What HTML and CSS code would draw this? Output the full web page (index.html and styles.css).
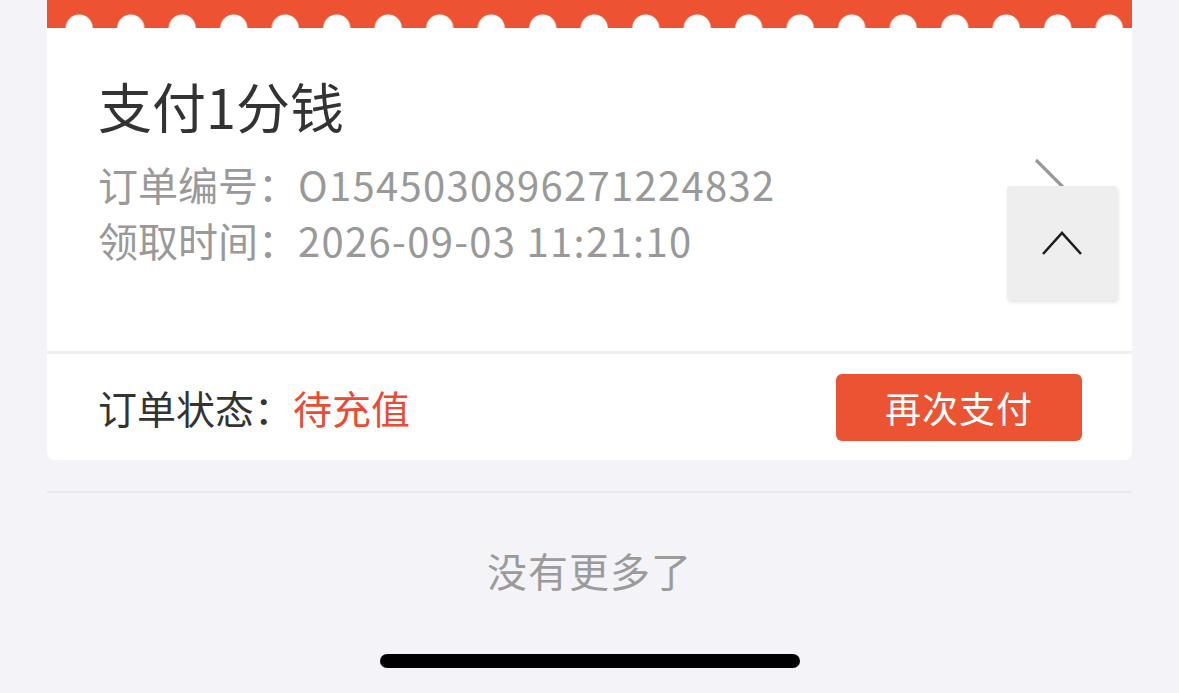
FILE: index.html
```html
<!DOCTYPE html>
<html lang="zh-CN">
<head>
<meta charset="utf-8">
<title>订单</title>
<link rel="stylesheet" href="styles.css">
</head>
<body>
<div class="page">
  <div class="card">
    <div class="band"></div>
    <div class="info">
      <div class="title">支付1分钱</div>
      <div class="meta"><span class="label">订单编号：</span><span class="num">O1545030896271224832</span></div>
      <div class="meta"><span class="label">领取时间：</span><span class="num">2026-09-03 11:21:10</span></div>
      <svg class="chev" width="40" height="70" viewBox="0 0 40 70"><polyline points="4,2 36,34 4,66" fill="none" stroke="#9a9a9a" stroke-width="3.2"/></svg>
      <div class="totop">
        <svg width="44" height="28" viewBox="0 0 44 28"><polyline points="3,25 22,4 41,25" fill="none" stroke="#1e1e1e" stroke-width="2.6"/></svg>
      </div>
    </div>
    <div class="divider"></div>
    <div class="status">
      <div class="status-text">订单状态：<span class="red">待充值</span></div>
      <div class="btn">再次支付</div>
    </div>
  </div>
  <div class="rule"></div>
  <div class="nomore">没有更多了</div>
  <div class="home"></div>
</div>
</body>
</html>
```

FILE: styles.css
```css
html, body {
  margin: 0;
  padding: 0;
  background: #f4f4f8;
  font-family: "Noto Sans CJK SC", "Noto Sans", sans-serif;
}
.page {
  width: 1179px;
  height: 693px;
  overflow: hidden;
  padding: 0 47px;
  box-sizing: border-box;
}
.card {
  background: #ffffff;
  border-radius: 0 0 8px 8px;
}
.band {
  height: 28px;
  background-color: #ed5333;
  background-image: radial-gradient(circle at 50% 100%, #ffffff 13px, rgba(255,255,255,0) 14px);
  background-size: 51.5px 28px;
  background-position: 6.5px 0;
  background-repeat: repeat-x;
}
.info {
  position: relative;
  height: 323px;
  padding: 46px 0 0 51px;
  box-sizing: border-box;
}
.title {
  font-size: 54px;
  line-height: 64px;
  color: #333333;
  margin-bottom: 18px;
}
.meta {
  font-size: 40px;
  line-height: 56px;
  color: #999999;
  white-space: nowrap;
}
.num {
  letter-spacing: 1.3px;
}
.chev {
  position: absolute;
  left: 985px;
  top: 130px;
}
.totop {
  position: absolute;
  left: 960px;
  top: 158px;
  width: 110px;
  height: 114px;
  background: #eeeeee;
  border-radius: 3px;
  box-shadow: 1px 2px 4px rgba(0,0,0,0.12);
  display: flex;
  align-items: center;
  justify-content: center;
}
.divider {
  height: 3px;
  background: #efefef;
}
.status {
  height: 106px;
  display: flex;
  align-items: center;
  justify-content: space-between;
  padding: 0 50px 0 51px;
}
.status-text {
  font-size: 39px;
  color: #333333;
}
.red {
  color: #ea4b33;
}
.btn {
  width: 246px;
  height: 67px;
  background: #ec5332;
  border-radius: 6px;
  color: #ffffff;
  font-size: 36px;
  display: flex;
  align-items: center;
  justify-content: center;
  letter-spacing: 1px;
}
.rule {
  margin-top: 31px;
  height: 2px;
  background: #e9e9ee;
}
.nomore {
  margin-top: 52px;
  text-align: center;
  font-size: 40px;
  line-height: 50px;
  color: #9b9b9b;
  letter-spacing: 1px;
}
.home {
  width: 420px;
  height: 14px;
  border-radius: 7px;
  background: #000000;
  margin: 59px auto 0;
}
```
